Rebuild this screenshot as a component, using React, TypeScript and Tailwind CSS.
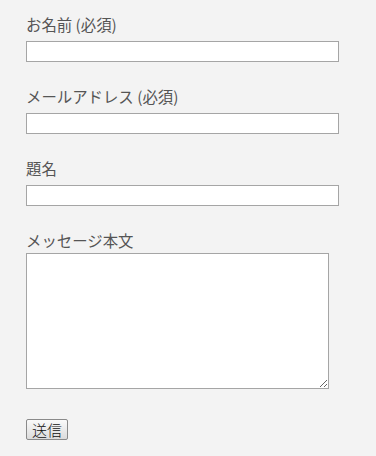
import React from "react";

const font = { fontFamily: '"Noto Sans CJK JP", "Noto Sans", sans-serif' };

function Field({ label, children, first }: { label: string; children: React.ReactNode; first?: boolean }) {
  return (
    <div className={first ? "" : "mt-[22px]"}>
      <div className="text-[15.4px] leading-[24px] text-[#555555]">{label}</div>
      {children}
    </div>
  );
}

export default function App() {
  return (
    <div className="min-h-[456px] w-full bg-[#f3f3f3] pl-[26px] pt-[12px]" style={font}>
      <Field label="お名前 (必須)" first>
        <input type="text" className="mt-[5px] block h-[21px] w-[313px] border border-[#a5a5a5] bg-white outline-none" />
      </Field>
      <Field label="メールアドレス (必須)">
        <input type="email" className="mt-[5px] block h-[21px] w-[313px] border border-[#a5a5a5] bg-white outline-none" />
      </Field>
      <Field label="題名">
        <input type="text" className="mt-[5px] block h-[21px] w-[313px] border border-[#a5a5a5] bg-white outline-none" />
      </Field>
      <Field label="メッセージ本文">
        <textarea className="mt-[1px] block h-[136px] w-[303px] border border-[#a5a5a5] bg-white outline-none" />
      </Field>
      <button
        type="button"
        className="mt-[30px] block h-[21px] w-[42px] rounded-[2px] border border-[#8a8a8a] bg-gradient-to-b from-[#fafafa] to-[#dcdcdc] text-[15px] font-light leading-[19px] text-[#111111]"
      >
        送信
      </button>
    </div>
  );
}
